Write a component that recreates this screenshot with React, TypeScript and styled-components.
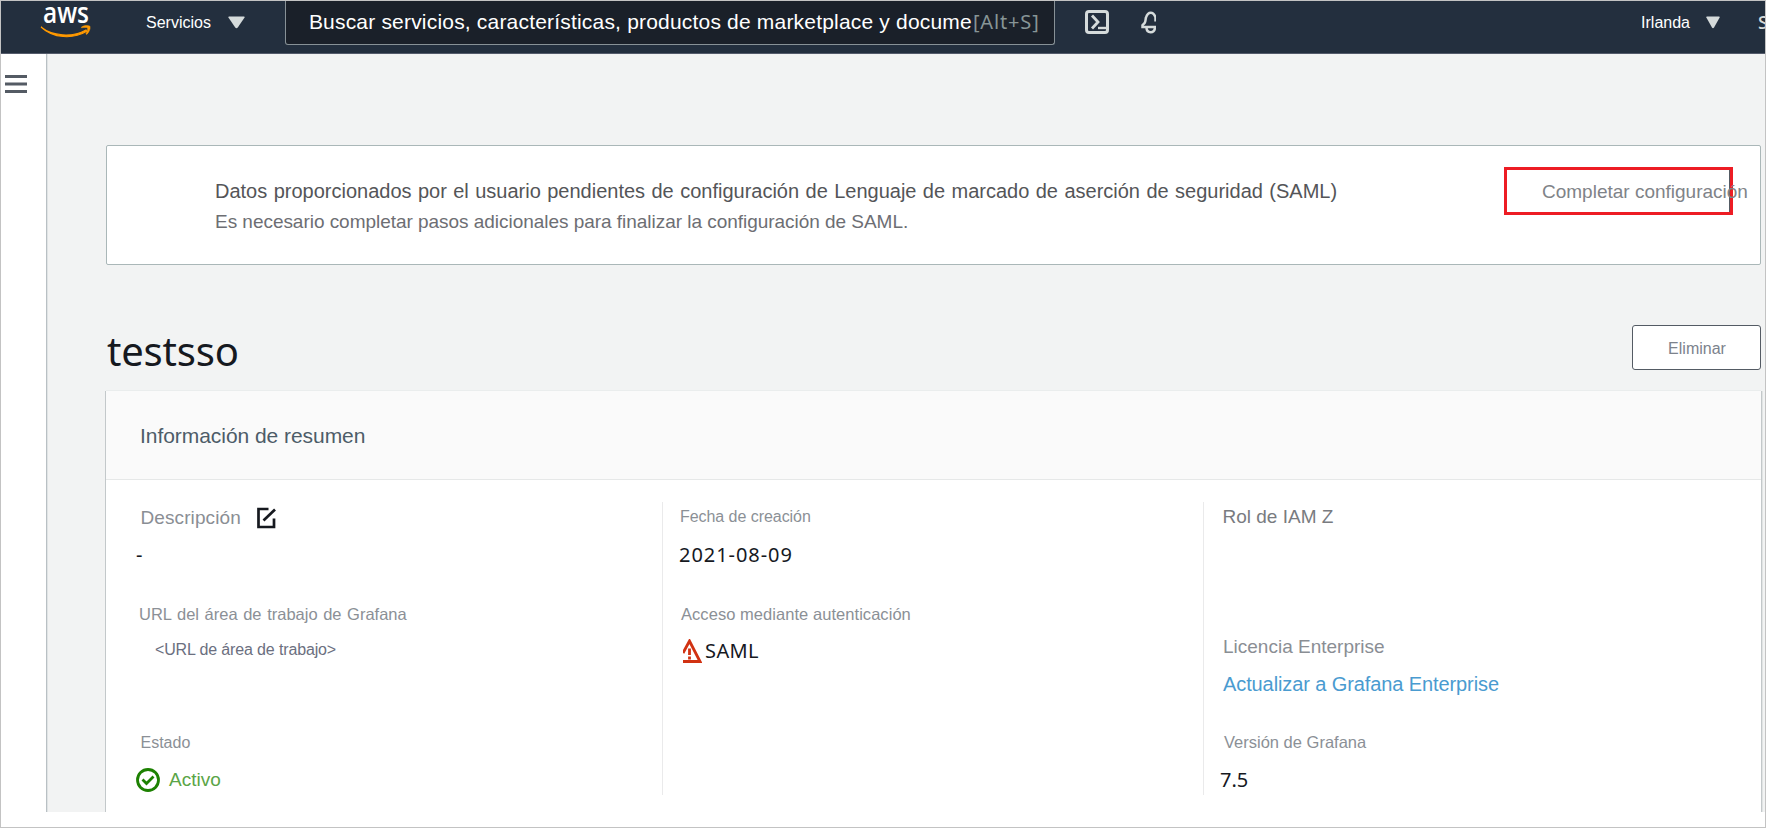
import React from "react";
import styled, { createGlobalStyle } from "styled-components";

const GlobalStyle = createGlobalStyle`
  * { box-sizing: border-box; }
  body { margin: 0; background: #fff; font-family: "Liberation Sans", Arial, sans-serif; }
  button { font-family: inherit; }
`;

const Page = styled.div`
  width: 1766px;
  height: 828px;
  border: 1px solid #c3c3c3;
  background: #fff;
  overflow: hidden;
  display: flex;
  flex-direction: column;
`;

const TopBar = styled.header`
  flex: none;
  height: 53px;
  display: flex;
  align-items: flex-start;
  background: #232f3e;
  border-bottom: 1px solid #545b6b;
`;

const Logo = styled.svg`
  flex: none;
  width: 52px;
  height: 38px;
  margin-left: 39px;
`;

const NavMenu = styled.button<{ $indent: number; $gap: number }>`
  flex: none;
  display: flex;
  align-items: center;
  gap: ${(p) => p.$gap}px;
  height: 43px;
  margin: 0 0 0 ${(p) => p.$indent}px;
  padding: 0;
  border: 0;
  background: none;
  color: #fff;
  font-size: 16px;
  line-height: 44px;
`;

const Caret = styled.svg<{ $size: number }>`
  width: ${(p) => p.$size}px;
  height: 13px;
  fill: #d5dbdb;
`;

const SearchBox = styled.div`
  flex: none;
  width: 770px;
  height: 44px;
  margin-left: 40px;
  padding: 0 12px 0 23px;
  display: flex;
  align-items: flex-start;
  background: #1a2029;
  border: 1px solid #879196;
  border-top: 0;
  border-radius: 0 0 3px 3px;
`;

const SearchText = styled.div`
  flex: none;
  width: 664px;
  overflow: hidden;
  white-space: nowrap;
  color: #fff;
  font-size: 21px;
  line-height: 41px;
  height: 42px;
  letter-spacing: 0.19px;
`;

const Shortcut = styled.kbd`
  color: #879596;
  font-family: "Noto Sans", sans-serif;
  font-size: 20px;
  line-height: 41px;
  letter-spacing: 0.85px;
  white-space: nowrap;
`;

const BarIcon = styled.svg<{ $indent: number }>`
  flex: none;
  height: 27px;
  margin: 8px 0 0 ${(p) => p.$indent}px;
`;

const NextItem = styled.span`
  flex: none;
  width: 7px;
  margin-left: 38px;
  overflow: hidden;
  color: #d5dbdb;
  font: 500 18px/43px "Noto Sans", sans-serif;
`;

const Spacer = styled.div`
  flex: 1;
`;

const Body = styled.div`
  flex: none;
  height: 758px;
  display: flex;
`;

const SideRail = styled.aside`
  flex: none;
  width: 45px;
  padding: 21px 0 0 4px;
  background: #fff;
`;

const Main = styled.main`
  flex: 1;
  min-width: 0;
  padding: 91px 4px 0 59px;
  display: flex;
  flex-direction: column;
  background: #f2f3f3;
  border-left: 1px solid #b9c0c4;
  box-shadow: inset 1px 0 0 #e0e4e5;
`;

const Alert = styled.section`
  flex: none;
  height: 120px;
  display: flex;
  align-items: flex-start;
  justify-content: space-between;
  padding: 21px 27px 0 108px;
  background: #fff;
  border: 1px solid #aab7b8;
  border-radius: 2px;
`;

const AlertTitle = styled.h2`
  margin: 12px 0 0;
  color: #545558;
  font-size: 20px;
  font-weight: 400;
  line-height: 24px;
  word-spacing: 0.85px;
  white-space: nowrap;
`;

const AlertText = styled.p`
  margin: 7px 0 0;
  color: #6d6e73;
  font-size: 19px;
  line-height: 24px;
  letter-spacing: -0.035px;
  white-space: nowrap;
`;

const CompleteButton = styled.button`
  flex: none;
  width: 229px;
  height: 48px;
  padding: 1px 0 0 35px;
  border: 3px solid #ed1c24;
  background: #fff;
  box-shadow: inset -1px 0 0 #545b64;
  color: #7f8388;
  font-size: 19px;
  line-height: 42px;
  text-align: left;
  white-space: nowrap;
  overflow: visible;
`;

const TitleRow = styled.div`
  flex: none;
  height: 126px;
  padding-top: 60px;
  display: flex;
  align-items: flex-start;
  justify-content: space-between;
`;

const Title = styled.h1`
  margin: -1px 0 0 1px;
  color: #16191f;
  font: 400 40px/54px "Noto Sans", sans-serif;
  letter-spacing: -0.2px;
`;

const DeleteButton = styled.button`
  width: 129px;
  height: 45px;
  padding: 2px 0 0 1px;
  border: 1px solid #545b64;
  border-radius: 3px;
  background: #fff;
  color: #7c828c;
  font-size: 16px;
`;

const Panel = styled.section`
  flex: 1;
  background: #fff;
  box-shadow: -1px 0 0 #c3c8ca, 1px 0 0 #c3c8ca, 2px 0 0 #e1e4e4, 0 -1px 0 #eaeded;
`;

const PanelHeader = styled.h3`
  height: 89px;
  margin: 0;
  padding-left: 34px;
  background: #fafafa;
  border-bottom: 1px solid #e6e8e8;
  color: #4d5c68;
  font-size: 21px;
  font-weight: 400;
  line-height: 89px;
  letter-spacing: -0.05px;
`;

const Columns = styled.div`
  display: grid;
  grid-template-columns: 556px 541px 1fr;
  padding-top: 22px;
`;

const Column = styled.div<{ $divided?: boolean }>`
  height: 293px;
  display: flex;
  flex-direction: column;
  padding-left: ${(p) => (p.$divided ? 18 : 34)}px;
  border-left: ${(p) => (p.$divided ? "1px solid #eaeaeb" : "0")};
`;

const Label = styled.div<{ $size?: number; $top: number; $color?: string; $word?: number; $track?: number; $indent?: number }>`
  display: flex;
  align-items: center;
  margin-top: ${(p) => p.$top}px;
  margin-left: ${(p) => p.$indent ?? 0}px;
  color: ${(p) => p.$color ?? "#8b9096"};
  font-size: ${(p) => p.$size ?? 16}px;
  line-height: 24px;
  height: 24px;
  word-spacing: ${(p) => p.$word ?? 0}px;
  letter-spacing: ${(p) => p.$track ?? 0}px;
  white-space: pre;
`;

const Value = styled.div<{ $top: number; $track?: number; $indent?: number }>`
  display: flex;
  align-items: center;
  margin-top: ${(p) => p.$top}px;
  margin-left: ${(p) => p.$indent ?? 0}px;
  height: 24px;
  color: #16191f;
  font: 20px/24px "Noto Sans", sans-serif;
  letter-spacing: ${(p) => p.$track ?? 0}px;
`;

const EditIcon = styled.svg`
  margin: -1px 0 0 15px;
`;

const WarningIcon = styled.svg`
  margin: 0 3px 0 2px;
`;

const CheckIcon = styled.svg`
  margin-right: 9px;
`;

function CaretDown({ size }: { size: number }) {
  return (
    <Caret $size={size} viewBox="0 0 16 13" preserveAspectRatio="none">
      <path d="M1 .5h14q1.2 0 .6 1L9.2 11.6q-1.2 1.4-2.4 0L.4 1.500q-.6-1 .6-1z" />
    </Caret>
  );
}

export default function App() {
  return (
    <>
      <GlobalStyle />
      <Page>
        <TopBar>
          <Logo viewBox="40 1 52 38">
            <text x="43" y="22.500" fill="#fff" fontFamily="Open Sans" fontWeight="600" fontSize="28" textLength="46" lengthAdjust="spacingAndGlyphs">
              aws
            </text>
            <path d="M41 27C52 36 72 37.900 86 29.900l.8 1.400C73 39.500 53 38.500 41 27z" fill="#ff9900" stroke="#ff9900" strokeWidth="1.100" />
            <path d="M81.500 27C84.500 25.200 88 25.200 90 26.200c.6 2.900-1 6-3.200 8.200l-.9-.5c1.300-2.300 2-4.500 1.700-6-1.500-.8-3.500-.5-6.100-.1z" fill="#ff9900" stroke="#ff9900" strokeWidth=".5" />
          </Logo>
          <NavMenu $indent={54} $gap={17}>
            Servicios
            <CaretDown size={17} />
          </NavMenu>
          <SearchBox>
            <SearchText>Buscar servicios, características, productos de marketplace y documentos</SearchText>
            <Shortcut>[Alt+S]</Shortcut>
          </SearchBox>
          <BarIcon $indent={29} width="26" viewBox="0 0 26 27" fill="none" stroke="#d5dbdb">
            <rect x="2.500" y="2.500" width="21" height="21" rx="2.500" strokeWidth="3" />
            <path d="M8 6.500l6 6.500-6 6.500" strokeWidth="2.800" />
            <path d="M14 19h8" strokeWidth="2.400" />
          </BarIcon>
          <BarIcon $indent={29} width="17" viewBox="0 0 17 27" fill="none" stroke="#d5dbdb" strokeWidth="2.500">
            <path d="M18 18H3.500v-1.800l2-2C7 12 6.300 10.500 7 8.500 8 5.200 9.500 3.700 11.800 3.700s3.700 1.500 4.700 4.800v4" />
            <path d="M7.500 18.500c0 3 1.500 4.700 4.200 4.700s4.200-1.700 4.200-4.700" />
          </BarIcon>
          <Spacer />
          <NavMenu $indent={0} $gap={16}>
            Irlanda
            <CaretDown size={14} />
          </NavMenu>
          <NextItem>S</NextItem>
        </TopBar>

        <Body>
          <SideRail>
            <svg width="22" height="19" viewBox="0 0 22 19" fill="#545b64">
              <path d="M0 0h22v3H0zM0 7.500h22v3H0zM0 15h22v3H0z" />
            </svg>
          </SideRail>
          <Main>
            <Alert>
              <div>
                <AlertTitle>
                  Datos proporcionados por el usuario pendientes de configuración de Lenguaje de marcado de aserción de seguridad (SAML)
                </AlertTitle>
                <AlertText>Es necesario completar pasos adicionales para finalizar la configuración de SAML.</AlertText>
              </div>
              <CompleteButton>Completar configuración</CompleteButton>
            </Alert>

            <TitleRow>
              <Title>testsso</Title>
              <DeleteButton>Eliminar</DeleteButton>
            </TitleRow>

            <Panel>
              <PanelHeader>Información de resumen</PanelHeader>
              <Columns>
                <Column>
                  <Label $size={19} $top={4} $track={0.1} $indent={0.5} $color="#8a8e94">
                    Descripción
                    <EditIcon width="21" height="22" viewBox="0 0 21 22" fill="none" stroke="#16191f" strokeWidth="2.700">
                      <path d="M12.500 2H2.500v18h15.500v-8.500" />
                      <path d="M19 2.500L7.500 13.500" />
                    </EditIcon>
                  </Label>
                  <Value $top={13} $indent={-4}>-</Value>
                  <Label $top={35} $size={16.5} $word={1} $indent={-1}>URL del área de trabajo de Grafana</Label>
                  <Label $top={12} $indent={15} $track={-0.14} $color="#6b6f80">{"<URL de área de trabajo>"}</Label>
                  <Label $top={69} $indent={0.5}>Estado</Label>
                  <Label $top={13} $size={19} $indent={-4} $color="#5aa547">
                    <CheckIcon width="24" height="24" viewBox="0 0 24 24" fill="none" stroke="#1d8102">
                      <circle cx="12" cy="12" r="10.500" strokeWidth="2.800" />
                      <path d="M6.500 11.500l4 4 7-7" strokeWidth="2.800" />
                    </CheckIcon>
                    Activo
                  </Label>
                </Column>
                <Column $divided>
                  <Label $top={3} $indent={-1} $track={-0.05}>Fecha de creación</Label>
                  <Value $top={14} $indent={-2} $track={0.95}>2021-08-09</Value>
                  <Label $top={35} $size={16.5} $track={0.05}>Acceso mediante autenticación</Label>
                  <Value $top={13} $track={0.4}>
                    <WarningIcon width="19" height="24" viewBox="0 0 19 24" fill="none" stroke="#d13212">
                      <path d="M0 22.500h17L6.500 2 0 14" strokeWidth="2.800" />
                      <path d="M6.500 9.500v6.500M6.500 17.500v3" strokeWidth="2.800" />
                    </WarningIcon>
                    SAML
                  </Value>
                </Column>
                <Column $divided>
                  <Label $top={3} $size={19} $indent={0.5} $color="#797b80">Rol de IAM Z</Label>
                  <Label $top={106} $size={19} $indent={1} $color="#8a8e94">Licencia Enterprise</Label>
                  <Label $top={13} $size={20} $track={-0.1} $indent={1} $color="#4a9bd0">Actualizar a Grafana Enterprise</Label>
                  <Label $top={34} $size={16.5} $indent={2}>Versión de Grafana</Label>
                  <Value $top={14} $indent={-2}>7.5</Value>
                </Column>
              </Columns>
            </Panel>
          </Main>
        </Body>
      </Page>
    </>
  );
}
